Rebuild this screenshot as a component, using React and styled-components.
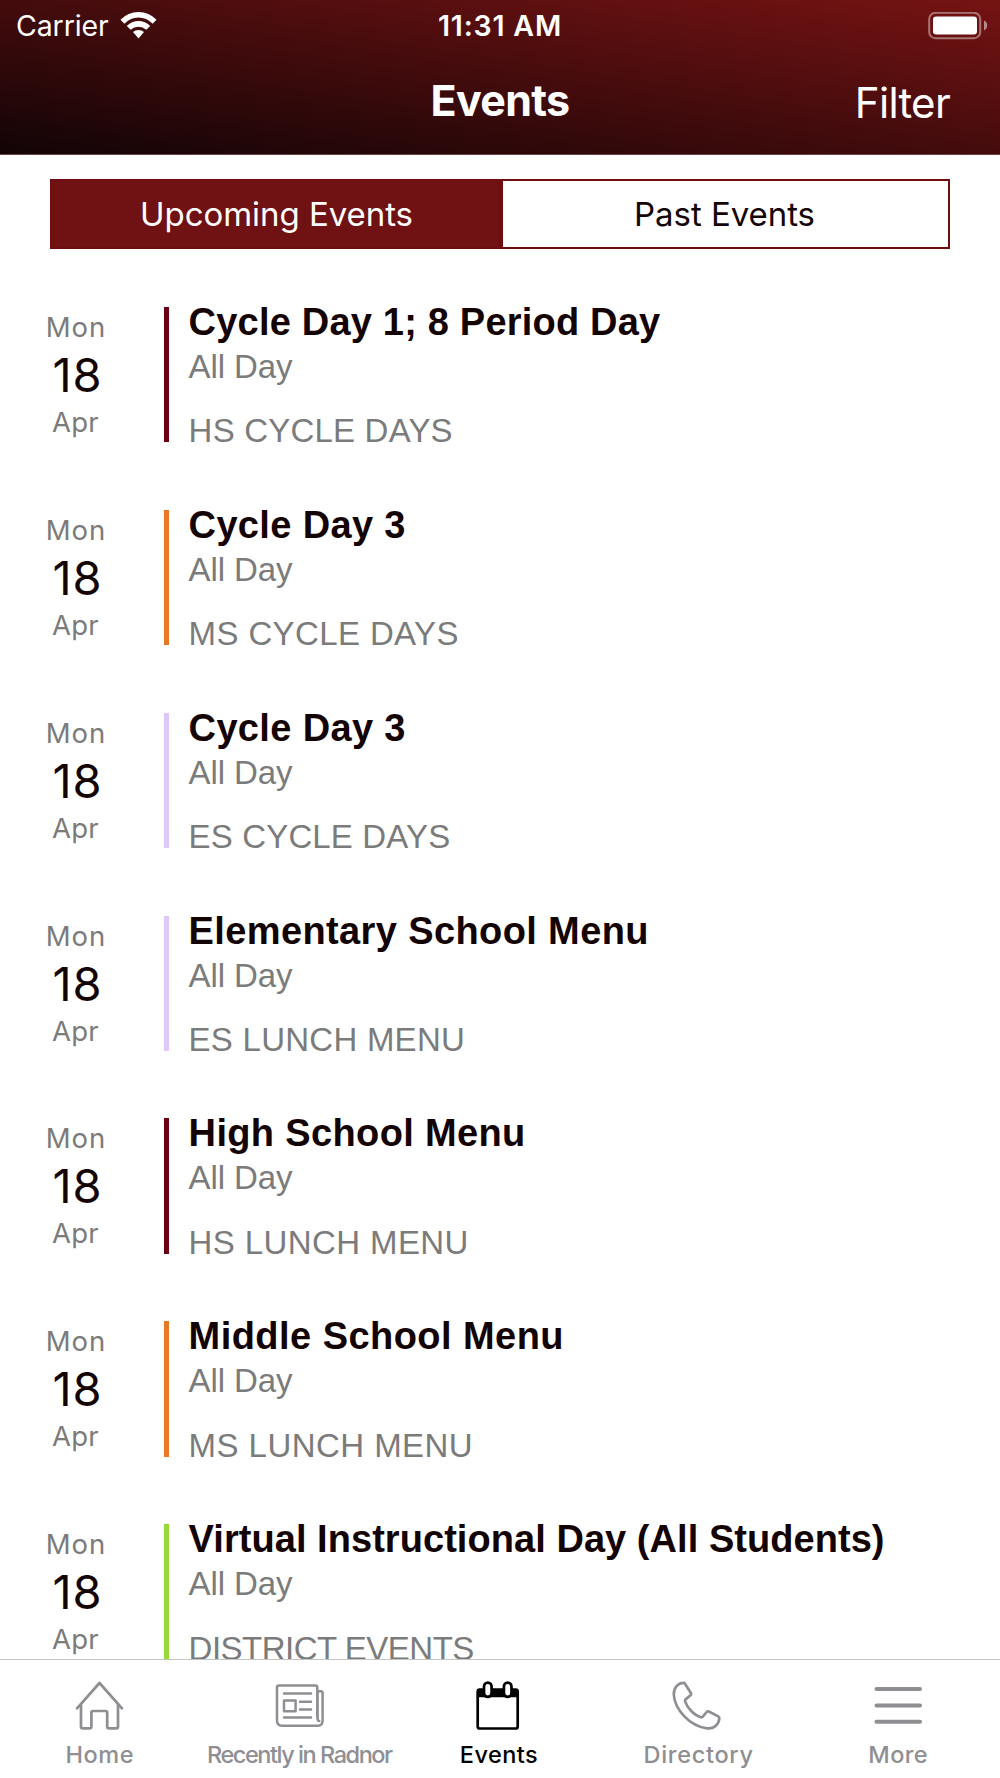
import React, { useState } from 'react';
import styled, { createGlobalStyle } from 'styled-components';

const sans = 'Inter, "Liberation Sans", sans-serif';
const helvetica = '"Liberation Sans", Arial, sans-serif';

const GlobalStyle = createGlobalStyle`
  *, *::before, *::after { box-sizing: border-box; }
  body { margin: 0; background: #fff; font-family: ${sans}; }
  button { border: 0; padding: 0; margin: 0; background: none; font: inherit; color: inherit; }
`;

const Screen = styled.div`
  display: flex;
  flex-direction: column;
  width: 1000px;
  height: 1778px;
  overflow: hidden;
  background: #fff;
`;

const Header = styled.header`
  flex: none;
  height: 155px;
  color: #fff;
  background: linear-gradient(to top right, #120406, #761313);
  border-bottom: 1px solid #6d4446;
`;

const HeaderRow = styled.div`
  display: grid;
  grid-template-columns: 1fr auto 1fr;
  align-items: center;
`;

const StatusBar = styled(HeaderRow)`
  height: 51px;
  padding: 0 12px 0 16px;
  font-size: 28.5px;
  line-height: 50px;
`;

const Carrier = styled.div`
  display: flex;
  align-items: center;
  gap: 11px;
  letter-spacing: -0.1px;
`;

const Clock = styled.div`
  margin-right: 4px;
  font-weight: 600;
  letter-spacing: 0.8px;
`;

const BatterySlot = styled.div`
  display: flex;
  justify-content: flex-end;
`;

const NavBar = styled(HeaderRow)`
  height: 103px;
  padding: 0 50px 0 50px;
`;

const NavTitle = styled.h1`
  grid-column: 2;
  margin: 0 0 5px;
  font-size: 43px;
  line-height: 52px;
  font-weight: 700;
  letter-spacing: -0.65px;
`;

const NavAction = styled.button`
  justify-self: end;
  font-size: 42px;
  line-height: 52px;
  letter-spacing: -0.7px;
`;

const Main = styled.main`
  flex: 1;
  min-height: 0;
  overflow: hidden;
`;

const Segments = styled.div`
  display: flex;
  height: 70px;
  margin: 24px 50px 58px;
`;

const Segment = styled.button`
  flex: ${(p) => p.$grow} 1 0;
  padding: ${(p) => (p.$first ? '0 0 1px 2px' : '0 2px 1px 0')};
  border: 2px solid #6f0d10;
  background: ${(p) => (p.$active ? '#701113' : '#fff')};
  color: ${(p) => (p.$active ? '#fff' : '#140607')};
  font-size: 33px;
  line-height: 40px;
  letter-spacing: -0.05px;
`;

const EventRow = styled.article`
  display: flex;
  height: 202.87px;
`;

const DateColumn = styled.div`
  width: 152px;
  margin-right: 12px;
  text-align: center;
`;

const DateLabel = styled.div`
  color: #7b7b7b;
  font-size: 27.5px;
  line-height: ${(p) => p.$line}px;
  letter-spacing: ${(p) => p.$tracking}px;
  padding-right: ${(p) => p.$shift || 0}px;
`;

const DayNumber = styled.div`
  padding-left: 3px;
  color: #140304;
  font-size: 47px;
  line-height: 56px;
  letter-spacing: 1px;
`;

const Stripe = styled.div`
  flex: none;
  width: 5px;
  height: 135.3px;
  margin-right: 19.6px;
  background: ${(p) => p.$color};
`;

const Details = styled.div`
  padding-top: 1px;
  font-family: ${helvetica};
  white-space: nowrap;
`;

const EventTitle = styled.h2`
  margin: 0 0 10px;
  color: #140304;
  font-size: 38px;
  line-height: 29px;
  font-weight: 700;
  letter-spacing: ${(p) => p.$tracking}px;
`;

const EventTime = styled.div`
  margin-bottom: 24.4px;
  color: #7b7b7b;
  font-size: 33px;
  line-height: 40px;
  letter-spacing: -0.1px;
`;

const Calendar = styled.div`
  color: #7b7b7b;
  font-size: 33px;
  line-height: 40px;
  letter-spacing: ${(p) => p.$tracking}px;
`;

const TabBar = styled.nav`
  flex: none;
  display: grid;
  grid-template-columns: repeat(5, 1fr);
  height: 119px;
  padding-right: 2px;
  border-top: 1px solid #c4c4c4;
  background: #fff;
`;

const Tab = styled.button`
  display: flex;
  flex-direction: column;
  align-items: center;
  padding-top: 21px;
  color: ${(p) => (p.$active ? '#000' : '#8e8e93')};
`;

const TabLabel = styled.span`
  margin-top: 11px;
  font-size: 23.5px;
  line-height: 28px;
  font-weight: 500;
  white-space: nowrap;
  letter-spacing: ${(p) => p.$tracking}px;
`;

const TabSvg = styled.svg`
  display: block;
  width: 49px;
  height: 49px;
  overflow: visible;
  fill: none;
  stroke: currentColor;
  stroke-width: ${(p) => p.$weight || 2.7}px;
  stroke-linecap: round;
  stroke-linejoin: round;
`;

const WifiIcon = () => (
  <svg width="37" height="28" viewBox="0 0 37 28" fill="#fff">
    <path d="M0.5 7.7Q8 0 18.5 0T36.5 7.7L32.6 11.7Q26.5 5.5 18.5 5.5T4.4 11.7Z" />
    <path d="M6.8 13.9Q11.8 9.1 18.5 9.1T30.2 13.9L26.3 17.8Q23 14.7 18.5 14.7T10.7 17.8Z" />
    <path d="M13 20.1Q15.3 18.1 18.5 18.1T24 20.1L18.5 26.4Z" />
  </svg>
);

const BatteryIcon = () => (
  <svg width="60" height="28" viewBox="0 0 60 28">
    <rect x="1.2" y="0.8" width="51" height="25.4" rx="6.2" fill="none" stroke="#fff" strokeOpacity=".42" strokeWidth="2" />
    <rect x="5" y="4.4" width="44" height="18" rx="3.2" fill="#fff" />
    <path d="M56 8.6Q59.2 10.1 59.2 13.5T56 18.4Z" fill="#fff" fillOpacity=".5" />
  </svg>
);

const HomeIcon = () => (
  <TabSvg viewBox="0 0 49 49">
    <path d="M2 27.3L24.5 2L47 27.3" />
    <path d="M6 23.5V45.5Q6 47.4 8 47.4H14.2Q16.4 47.4 16.4 45.5V31.5Q16.4 30 18 30H30.6Q32.2 30 32.2 31.5V45.5Q32.2 47.4 34.2 47.4H41Q43 47.4 43 45.5V23.5" />
  </TabSvg>
);

const NewsIcon = () => (
  <TabSvg viewBox="0 0 49 49" $weight={2.5}>
    <path d="M42.3 36.5V6.5Q42.3 4.6 40.3 4.6H4Q2 4.6 2 6.5V39.5Q2 44.7 7 44.7H43Q47.6 44.7 47.6 39.5V12Q47.6 10.2 45.8 10.2H42.6V38Q42.6 39.8 44.2 39.9" />
    <path d="M9 12.6H36M25 20.7H36M25 28.6H36M9 36.6H36" />
    <rect x="9" y="19.4" width="11.6" height="10.8" />
  </TabSvg>
);

const CalendarIcon = () => (
  <TabSvg viewBox="0 0 49 49">
    <rect x="3.7" y="8.7" width="40" height="38.8" rx="2" />
    <path d="M3.5 8.5H44V16.2H3.5Z" fill="currentColor" stroke="none" />
    <rect x="10" y="1.6" width="7.6" height="14.2" rx="3.8" fill="#fff" />
    <rect x="29.9" y="1.6" width="7.6" height="14.2" rx="3.8" fill="#fff" />
  </TabSvg>
);

const PhoneIcon = () => (
  <TabSvg viewBox="0 0 49 49">
    <path d="M9.4 1.9Q10.4 1.7 11 2.7L17 12.2Q17.5 13.2 16.8 14L11.6 18.4Q10.7 19.3 11.1 20.4C13.5 27.5 20.3 34.5 27 36.2Q28 36.5 28.8 35.6L32.7 31Q33.6 29.9 34.8 30.5L44.3 35.4Q45.5 36.1 45.3 37.5C44.8 44.2 39.5 48 33.2 47.3C15.5 45.3 .5 28 -.2 13.5C-.3 6.5 4 2.2 9.4 1.9Z" />
  </TabSvg>
);

const MoreIcon = () => (
  <TabSvg viewBox="0 0 49 49" $weight={4}>
    <path d="M2.5 8H46M2.5 24.4H46M2.5 40.7H46" />
  </TabSvg>
);

const maroon = '#6b0012';
const orange = '#e97824';
const lavender = '#dec8fb';
const green = '#97da38';

const events = [
  { title: 'Cycle Day 1; 8 Period Day', tt: 0.2, calendar: 'HS CYCLE DAYS', ct: 0.2, color: maroon },
  { title: 'Cycle Day 3', tt: 0.35, calendar: 'MS CYCLE DAYS', ct: 0.38, color: orange },
  { title: 'Cycle Day 3', tt: 0.35, calendar: 'ES CYCLE DAYS', ct: 0.15, color: lavender },
  { title: 'Elementary School Menu', tt: 0.38, calendar: 'ES LUNCH MENU', ct: 0.25, color: lavender },
  { title: 'High School Menu', tt: 0.35, calendar: 'HS LUNCH MENU', ct: 0.4, color: maroon },
  { title: 'Middle School Menu', tt: 0.45, calendar: 'MS LUNCH MENU', ct: 0.45, color: orange },
  { title: 'Virtual Instructional Day (All Students)', tt: 0.05, calendar: 'DISTRICT EVENTS', ct: -0.5, color: green },
];

const tabs = [
  { label: 'Home', icon: HomeIcon, tracking: 0.6 },
  { label: 'Recently in Radnor', icon: NewsIcon, tracking: -1.45 },
  { label: 'Events', icon: CalendarIcon, tracking: 0.45 },
  { label: 'Directory', icon: PhoneIcon, tracking: 0.7 },
  { label: 'More', icon: MoreIcon, tracking: 0.4 },
];

export default function App() {
  const [segment, setSegment] = useState('upcoming');
  const [tab, setTab] = useState('Events');

  return (
    <Screen>
      <GlobalStyle />
      <Header>
        <StatusBar>
          <Carrier>
            Carrier
            <WifiIcon />
          </Carrier>
          <Clock>11:31 AM</Clock>
          <BatterySlot>
            <BatteryIcon />
          </BatterySlot>
        </StatusBar>
        <NavBar>
          <NavTitle>Events</NavTitle>
          <NavAction>Filter</NavAction>
        </NavBar>
      </Header>
      <Main>
        <Segments>
          <Segment $first $grow={452} $active={segment === 'upcoming'} onClick={() => setSegment('upcoming')}>
            Upcoming Events
          </Segment>
          <Segment $grow={450} $active={segment === 'past'} onClick={() => setSegment('past')}>
            Past Events
          </Segment>
        </Segments>
        {events.map((e) => (
          <EventRow key={e.calendar}>
            <DateColumn>
              <DateLabel $line={40} $tracking={0.9}>Mon</DateLabel>
              <DayNumber>18</DayNumber>
              <DateLabel $line={38} $tracking={0.2} $shift={1}>Apr</DateLabel>
            </DateColumn>
            <Stripe $color={e.color} />
            <Details>
              <EventTitle $tracking={e.tt}>{e.title}</EventTitle>
              <EventTime>All Day</EventTime>
              <Calendar $tracking={e.ct}>{e.calendar}</Calendar>
            </Details>
          </EventRow>
        ))}
      </Main>
      <TabBar>
        {tabs.map(({ label, icon: Icon, tracking }) => (
          <Tab key={label} $active={tab === label} onClick={() => setTab(label)}>
            <Icon />
            <TabLabel $tracking={tracking}>{label}</TabLabel>
          </Tab>
        ))}
      </TabBar>
    </Screen>
  );
}
